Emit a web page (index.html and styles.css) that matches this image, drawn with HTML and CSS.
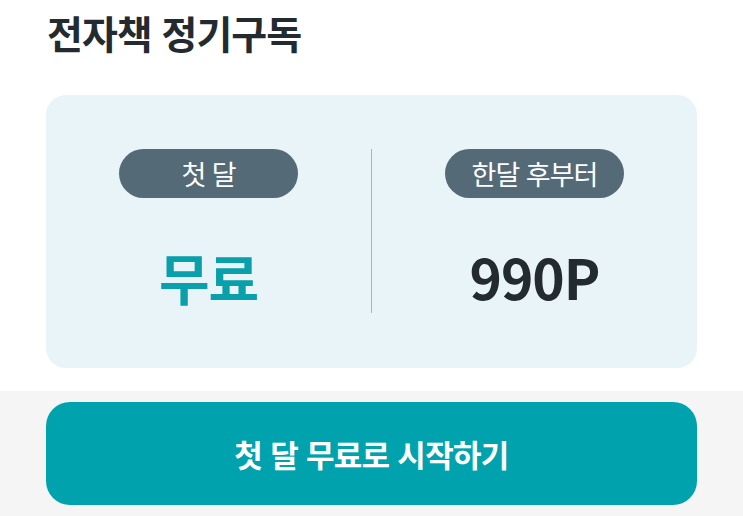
FILE: index.html
```html
<!DOCTYPE html>
<html lang="ko">
<head>
    <meta charset="UTF-8">
    <meta name="viewport" content="width=device-width, initial-scale=1.0">
    <title>전자책 정기구독</title>
    <link rel="stylesheet" href="styles.css">
</head>
<body>
    <section class="plan">
        <h1 class="title">전자책 정기구독</h1>

        <div class="card">
            <div class="col">
                <span class="pill">첫 달</span>
                <p class="price free">무료</p>
            </div>
            <div class="divider"></div>
            <div class="col">
                <span class="pill">한달 후부터</span>
                <p class="price">990P</p>
            </div>
        </div>
    </section>

    <div class="bottom">
        <button type="button" class="start">첫 달 무료로 시작하기</button>
    </div>
</body>
</html>
```

FILE: styles.css
```css
/* Page base */
body {
    margin: 0;
    background-color: #fff;
    font-family: "Noto Sans CJK KR", "Noto Sans", sans-serif;
    color: #232b31;
}

.plan {
    padding: 8px 46px 23px;
}

.title {
    margin: 0 0 39px 1px;
    font-size: 39px;
    line-height: 48px;
    font-weight: 700;
    letter-spacing: -1px;
}

/* Price card */
.card {
    display: grid;
    grid-template-columns: 1fr 1px 1fr;
    height: 273px;
    box-sizing: border-box;
    padding: 54px 0 55px;
    border-radius: 20px;
    background-color: #e8f4f7;
}

.col {
    display: flex;
    flex-direction: column;
    align-items: center;
}

.divider {
    background-color: #a9b6bb;
}

.pill {
    display: flex;
    align-items: center;
    justify-content: center;
    width: 179px;
    height: 49px;
    border-radius: 25px;
    background-color: #546b77;
    color: #fff;
    font-size: 27px;
    letter-spacing: -1px;
}

.price {
    margin: 48px 0 0;
    font-size: 55px;
    line-height: 60px;
    font-weight: 700;
    letter-spacing: -1px;
}

.price.free {
    color: #0aa0ab;
}

/* Bottom action */
.bottom {
    padding: 11px 46px;
    background-color: #f5f5f5;
}

.start {
    display: block;
    width: 100%;
    height: 103px;
    border: none;
    border-radius: 24px;
    background-color: #00a3ad;
    color: #fff;
    font-family: inherit;
    font-size: 31px;
    font-weight: 700;
    letter-spacing: -0.7px;
}
```
